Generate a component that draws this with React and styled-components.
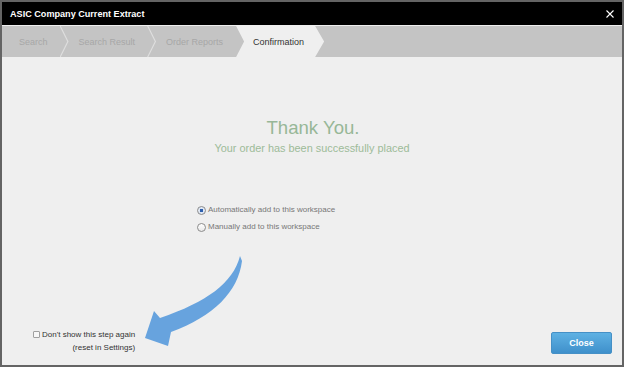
import React from 'react'
import styled, { createGlobalStyle } from 'styled-components'

const GlobalStyle = createGlobalStyle`
html, body, #root {
  margin: 0;
  padding: 0;
  height: 100%;
}
body {
  background: #ffffff;
  font-family: "Liberation Sans", Arial, sans-serif;
}
`

const Window = styled.div`
position: relative;
box-sizing: border-box;
width: 624px;
height: 367px;
border: 2px solid #646464;
background: #efefef;
display: flex;
flex-direction: column;
overflow: hidden;
`

const TitleBar = styled.div`
height: 23px;
flex: none;
background: #000;
color: #fff;
display: flex;
align-items: center;
justify-content: space-between;
padding: 0 8px 0 8px;
font-size: 9.1px;
font-weight: bold;
`

const CloseIcon = styled.svg`
width: 8px;
height: 8px;
display: block;
`

const Crumbs = styled.div`
height: 31px;
flex: none;
margin-top: 1px;
background: #c4c4c4;
display: flex;
align-items: stretch;
font-size: 9px;
`

const Step = styled.div`
position: relative;
display: flex;
align-items: center;
padding: 0 ${p => (p.active ? '20px' : '13px')} 0 ${p => p.pl}px;
color: ${p => (p.active ? '#333' : '#a7a7a7')};
background: ${p => (p.active ? '#efefef' : 'transparent')};
clip-path: ${p =>
  p.active
    ? 'polygon(0 0, calc(100% - 9px) 0, 100% 50%, calc(100% - 9px) 100%, 0 100%, 8px 50%)'
    : 'none'};
&::after {
  content: '';
  display: ${p => (p.sep ? 'block' : 'none')};
  position: absolute;
  top: 0;
  right: -8px;
  width: 9px;
  height: 100%;
  background: #dedede;
  clip-path: polygon(0 0, 1.3px 0, 100% 50%, 1.3px 100%, 0 100%, calc(100% - 1.3px) 50%);
  z-index: 1;
}
`

const Body = styled.div`
flex: 1;
display: flex;
flex-direction: column;
`

const Thanks = styled.div`
margin-top: 60px;
text-align: center;
color: #97b797;
`

const Heading = styled.div`
font-size: 18.6px;
line-height: 22px;
padding-left: 2px;
`

const Sub = styled.div`
font-size: 10.9px;
line-height: 14px;
margin-top: 2px;
color: #9dbb99;
`

const Options = styled.div`
margin-top: 49px;
padding-left: 195px;
display: flex;
flex-direction: column;
gap: 5px;
`

const Option = styled.label`
display: flex;
align-items: center;
gap: 2px;
font-size: 8px;
line-height: 12px;
color: #777;
`

const Radio = styled.span`
box-sizing: border-box;
width: 9px;
height: 9px;
border-radius: 50%;
border: 1px solid #8c8c8c;
background: ${p =>
  p.checked
    ? 'radial-gradient(circle, #2d5fae 0 1.6px, #dfe7f3 2px)'
    : 'linear-gradient(#fff, #e8e8e8)'};
`

const Footer = styled.div`
margin-top: auto;
display: flex;
justify-content: space-between;
align-items: flex-end;
padding: 0 10px 11px 31px;
`

const KeepRow = styled.label`
display: flex;
align-items: flex-start;
gap: 2px;
font-size: 8px;
line-height: 13px;
color: #333;
`

const Check = styled.span`
box-sizing: border-box;
width: 7px;
height: 7px;
margin-top: 3px;
border: 1px solid #a0a0a0;
border-radius: 1px;
background: #f7f7f7;
`

const KeepText = styled.div`
display: flex;
flex-direction: column;
align-items: flex-end;
`

const Button = styled.button`
width: 61px;
height: 22px;
border: 1px solid #4590c6;
border-radius: 2px;
background: linear-gradient(#5eb1e3, #3f90cb);
color: #fff;
font-family: "Liberation Sans", Arial, sans-serif;
font-size: 9px;
font-weight: bold;
padding: 0;
`

const Arrow = styled.svg`
position: absolute;
left: -2px;
top: -2px;
width: 624px;
height: 367px;
pointer-events: none;
`

const steps = [
  { label: 'Search', pl: 17, sep: true },
  { label: 'Search Result', pl: 18, sep: true },
  { label: 'Order Reports', pl: 18, sep: false },
  { label: 'Confirmation', pl: 17, active: true },
]

const App = () => {
  return (
    <>
      <GlobalStyle />
      <Window>
        <TitleBar>
          <span>ASIC Company Current Extract</span>
          <CloseIcon viewBox="0 0 8 8">
            <path d="M0.5 0.5 L7.5 7.5 M7.5 0.5 L0.5 7.5" stroke="#fff" strokeWidth="1.1" />
          </CloseIcon>
        </TitleBar>
        <Crumbs>
          {steps.map(s => (
            <Step key={s.label} pl={s.pl} sep={s.sep} active={s.active}>
              {s.label}
            </Step>
          ))}
        </Crumbs>
        <Body>
          <Thanks>
            <Heading>Thank You.</Heading>
            <Sub>Your order has been successfully placed</Sub>
          </Thanks>
          <Options>
            <Option>
              <Radio checked />
              Automatically add to this workspace
            </Option>
            <Option>
              <Radio />
              Manually add to this workspace
            </Option>
          </Options>
          <Footer>
            <KeepRow>
              <Check />
              <KeepText>
                <span>Don't show this step again</span>
                <span>(reset in Settings)</span>
              </KeepText>
            </KeepRow>
            <Button>Close</Button>
          </Footer>
        </Body>
        <Arrow viewBox="0 0 624 367">
          <path
            d="M240 256 C233 283 207 302 160 318 L154 311 L145 338 L168 346 L171 332 C214 316 238 292 242 261 Z"
            fill="#67a3de"
          />
        </Arrow>
      </Window>
    </>
  )
}

export default App
